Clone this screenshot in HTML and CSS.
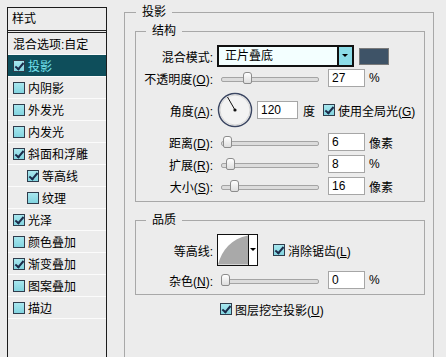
FILE: index.html
```html
<!DOCTYPE html>
<html lang="zh-CN">
<head>
    <meta charset="UTF-8">
    <title>图层样式 - 投影</title>
    <link rel="stylesheet" href="styles.css">
</head>
<body>
<div class="dialog">

    <!-- 样式列表 -->
    <div class="styles-panel">
        <div class="panel-head">样式</div>
        <div class="style-row">混合选项:自定</div>
        <div class="style-row selected"><span class="check on"></span>投影</div>
        <div class="style-row"><span class="check"></span>内阴影</div>
        <div class="style-row"><span class="check"></span>外发光</div>
        <div class="style-row"><span class="check"></span>内发光</div>
        <div class="style-row"><span class="check on"></span>斜面和浮雕</div>
        <div class="style-row sub"><span class="check on"></span>等高线</div>
        <div class="style-row sub"><span class="check"></span>纹理</div>
        <div class="style-row"><span class="check on"></span>光泽</div>
        <div class="style-row"><span class="check"></span>颜色叠加</div>
        <div class="style-row"><span class="check on"></span>渐变叠加</div>
        <div class="style-row"><span class="check"></span>图案叠加</div>
        <div class="style-row"><span class="check"></span>描边</div>
    </div>

    <!-- 投影设置 -->
    <fieldset class="group outer">
        <legend>投影</legend>

        <fieldset class="group inner structure">
            <legend>结构</legend>

            <div class="row">
                <label class="lbl">混合模式:</label>
                <div class="select"><span class="select-text">正片叠底</span><span class="select-btn"></span></div>
                <span class="swatch"></span>
            </div>

            <div class="row">
                <label class="lbl">不透明度(<u>O</u>):</label>
                <div class="slider"><span class="thumb" style="left: 22px"></span></div>
                <span class="num">27</span><span class="unit">%</span>
            </div>

            <div class="row angle-row">
                <label class="lbl">角度(<u>A</u>):</label>
                <svg class="dial" width="36" height="36" viewBox="0 0 36 36">
                    <circle cx="18" cy="18" r="16.5" fill="#f3f3f3" stroke="#3b4662" stroke-width="1.5"/>
                    <circle cx="18" cy="18" r="15" fill="none" stroke="#d6d6d6" stroke-width="1"/>
                    <line x1="18" y1="18" x2="10.5" y2="5" stroke="#111" stroke-width="1"/>
                    <circle cx="18" cy="18" r="1.6" fill="#111"/>
                </svg>
                <span class="num wide">120</span>
                <span class="unit">度</span>
                <span class="check on gap"></span><span class="check-text">使用全局光(<u>G</u>)</span>
            </div>

            <div class="row">
                <label class="lbl">距离(<u>D</u>):</label>
                <div class="slider"><span class="thumb" style="left: 2px"></span></div>
                <span class="num">6</span><span class="unit">像素</span>
            </div>

            <div class="row">
                <label class="lbl">扩展(<u>R</u>):</label>
                <div class="slider"><span class="thumb" style="left: 5px"></span></div>
                <span class="num">8</span><span class="unit">%</span>
            </div>

            <div class="row">
                <label class="lbl">大小(<u>S</u>):</label>
                <div class="slider"><span class="thumb" style="left: 9px"></span></div>
                <span class="num">16</span><span class="unit">像素</span>
            </div>
        </fieldset>

        <fieldset class="group inner quality">
            <legend>品质</legend>

            <div class="row contour-row">
                <label class="lbl">等高线:</label>
                <div class="contour">
                    <svg width="31" height="30" viewBox="0 0 31 30">
                        <rect width="31" height="30" fill="#fff"/>
                        <path d="M0 30 C4 15 14 3 31 0 L31 30 Z" fill="#a9a9a9"/>
                    </svg>
                    <span class="contour-btn"></span>
                </div>
                <span class="check on gap-wide"></span><span class="check-text">消除锯齿(<u>L</u>)</span>
            </div>

            <div class="row noise-row">
                <label class="lbl">杂色(<u>N</u>):</label>
                <div class="slider"><span class="thumb" style="left: 0px"></span></div>
                <span class="num">0</span><span class="unit">%</span>
            </div>
        </fieldset>

        <div class="knockout">
            <span class="check on"></span><span class="check-text">图层挖空投影(<u>U</u>)</span>
        </div>
    </fieldset>

</div>
</body>
</html>
```

FILE: styles.css
```css
* {
    margin: 0;
    padding: 0;
    box-sizing: border-box;
}

body {
    width: 446px;
    height: 357px;
    overflow: hidden;
    background: #ececec;
    color: #000;
    font-family: "Liberation Sans", "Noto Sans CJK SC", sans-serif;
    font-size: 12px;
}

.dialog {
    display: flex;
    align-items: flex-start;
}

/* left list */
.styles-panel {
    width: 100px;
    height: 350px;
    margin: 7px 0 0 7px;
    border: 1px solid #1c1c1c;
    border-bottom: none;
    background: #ececec;
}

.panel-head {
    height: 25px;
    padding-left: 4px;
    line-height: 22px;
    border-bottom: 3px double #222;
}

.style-row {
    display: flex;
    align-items: center;
    height: 22px;
    padding-left: 5px;
    border-bottom: 1px solid #fbfbfb;
    white-space: nowrap;
}

.style-row:first-of-type {
    padding-left: 4px;
}

.style-row.sub {
    padding-left: 19px;
}

.style-row .check {
    margin-right: 3px;
}

.style-row.selected {
    background: #0e4e5b;
    color: #74e2ee;
}

/* checkbox */
.check {
    position: relative;
    display: inline-block;
    flex: none;
    width: 12px;
    height: 12px;
    border: 1px solid #2f3c4c;
    background: linear-gradient(#a8e7ef, #82d4e0);
}

.check.on::after {
    content: "";
    position: absolute;
    left: 3px;
    top: 0px;
    width: 3px;
    height: 7px;
    border-right: 2px solid #1b2b4a;
    border-bottom: 2px solid #1b2b4a;
    transform: rotate(40deg);
}

.check-text {
    margin-left: 3px;
    white-space: nowrap;
}

/* group boxes */
.group {
    border: 1px solid #a8a8a8;
}

.group legend {
    line-height: 16px;
    padding: 0 6px;
}

.outer {
    width: 310px;
    height: 353px;
    margin: 4px 0 0 17px;
    padding: 3px 8px 0 10px;
    border-bottom: none;
}

.outer > legend {
    margin-left: 1px;
}

.inner {
    width: 290px;
    padding: 6px 0 4px 0;
}

.inner > legend {
    margin-left: 10px;
}

.quality {
    margin-top: 10px;
    padding-bottom: 3px;
}

.row {
    display: flex;
    align-items: center;
    height: 22px;
}

.angle-row {
    height: 42px;
}

.contour-row {
    height: 32px;
}

.noise-row {
    margin-top: 3px;
}

.lbl {
    width: 77px;
    text-align: right;
    white-space: nowrap;
}

/* blend select */
.select {
    display: flex;
    width: 137px;
    height: 22px;
    margin-left: 4px;
    border: 2px solid #111;
    background: #f3ffff;
}

.select-text {
    flex: 1;
    padding-left: 6px;
    line-height: 18px;
}

.select-btn {
    position: relative;
    width: 15px;
    border-left: 2px solid #111;
    background: #8cdce7;
}

.select-btn::after {
    content: "";
    position: absolute;
    left: 3px;
    top: 7px;
    border-left: 3px solid transparent;
    border-right: 3px solid transparent;
    border-top: 3px solid #000;
}

.swatch {
    width: 30px;
    height: 17px;
    margin-left: 5px;
    border: 1px solid #7a7a7a;
    background: #3e5367;
}

/* slider */
.slider {
    position: relative;
    width: 98px;
    height: 22px;
    margin-left: 8px;
}

.slider::before {
    content: "";
    position: absolute;
    left: 0;
    right: 0;
    top: 10px;
    height: 3px;
    border: 1px solid #a4a4a4;
    border-radius: 2px;
    background: #dcdcdc;
}

.thumb {
    position: absolute;
    top: 5px;
    width: 9px;
    height: 12px;
    border: 1px solid #8c8c8c;
    border-radius: 3px 3px 2px 2px;
    background: linear-gradient(#fff, #dedede);
}

.num {
    width: 37px;
    height: 18px;
    margin-left: 9px;
    padding-left: 3px;
    line-height: 16px;
    border: 1px solid #a6a6a6;
    background: #fff;
}

.num.wide {
    width: 41px;
    margin-left: 4px;
}

.unit {
    margin-left: 4px;
}

.angle-row .unit {
    margin-left: 5px;
}

.dial {
    margin-left: 4px;
}

.check.gap {
    margin-left: 8px;
}

.check.gap-wide {
    margin-left: 15px;
}

/* contour picker */
.contour {
    display: flex;
    width: 41px;
    height: 32px;
    margin-left: 4px;
    border: 1px solid #111;
    background: #fff;
}

.contour svg {
    display: block;
    border-right: 1px solid #111;
}

.contour-btn {
    position: relative;
    flex: 1;
}

.contour-btn::after {
    content: "";
    position: absolute;
    left: 1px;
    top: 13px;
    border-left: 3px solid transparent;
    border-right: 3px solid transparent;
    border-top: 3px solid #000;
}

.knockout {
    display: flex;
    align-items: center;
    height: 16px;
    margin-top: 6px;
    padding-left: 85px;
}
```
